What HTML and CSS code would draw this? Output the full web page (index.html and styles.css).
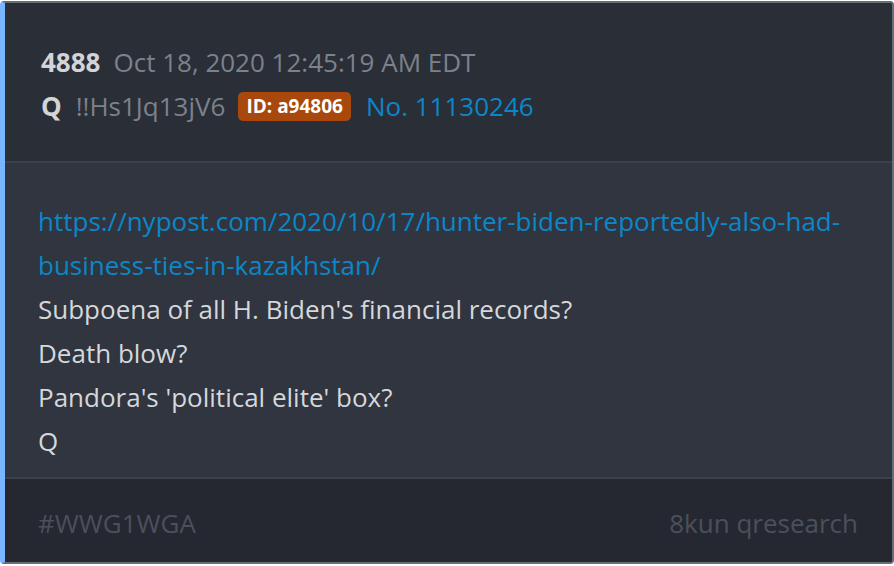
FILE: index.html
```html
<!DOCTYPE html>
<html lang="en">
<head>
    <meta charset="UTF-8">
    <title>Q Drop 4888</title>
    <link rel="stylesheet" href="styles.css">
</head>
<body>
    <div class="post">
        <!-- Post header -->
        <header class="post-header">
            <div class="meta-line">
                <span class="post-num">4888</span>
                <span class="post-date">Oct 18, 2020 12:45:19 AM EDT</span>
            </div>
            <div class="meta-line">
                <span class="author">Q</span>
                <span class="tripcode">!!Hs1Jq13jV6</span>
                <span class="id-badge">ID: a94806</span>
                <a class="post-link" href="#">No. 11130246</a>
            </div>
        </header>

        <!-- Post body -->
        <section class="post-body">
            <a class="body-link" href="#">https://nypost.com/2020/10/17/hunter-biden-reportedly-also-had-business-ties-in-kazakhstan/</a>
            <p>Subpoena of all H. Biden's financial records?</p>
            <p>Death blow?</p>
            <p>Pandora's 'political elite' box?</p>
            <p>Q</p>
        </section>

        <!-- Post footer -->
        <footer class="post-footer">
            <span>#WWG1WGA</span>
            <span>8kun qresearch</span>
        </footer>
    </div>
</body>
</html>
```

FILE: styles.css
```css
body {
    margin: 0;
    background-color: #fff;
    font-family: "Open Sans", "Noto Sans", sans-serif;
}

.post {
    margin-top: 1px;
    width: 894px;
    box-sizing: border-box;
    border: 2px solid #686d78;
    border-left: 5px solid #7ab6ff;
    border-radius: 4px;
    overflow: hidden;
    background-color: #30353f;
}

.post-header {
    background-color: #2a2e37;
    padding: 37px 34px 33px 36px;
    border-bottom: 2px solid #3c414b;
}

.meta-line {
    display: flex;
    align-items: center;
    height: 44px;
    font-size: 26px;
}

.post-num {
    font-weight: bold;
    color: #d2d4d8;
    margin-right: 13px;
}

.post-date {
    color: #7c818c;
}

.author {
    font-weight: bold;
    color: #d2d4d8;
    margin-right: 14px;
}

.tripcode {
    color: #7c818c;
    margin-right: 13px;
}

.id-badge {
    background-color: #a8480c;
    color: #fff;
    font-weight: bold;
    font-size: 19px;
    line-height: 29px;
    padding: 0 8px;
    border-radius: 5px;
    margin-right: 15px;
}

.post-link {
    color: #0b87c9;
    text-decoration: none;
}

.post-body {
    padding: 36px 34px 14px 33px;
    border-bottom: 2px solid #3c414b;
    font-size: 26px;
    line-height: 44px;
    color: #d5d7db;
}

.post-body p {
    margin: 0;
}

.body-link {
    display: block;
    color: #0b87c9;
    text-decoration: none;
}

.post-footer {
    display: flex;
    justify-content: space-between;
    background-color: #252831;
    padding: 22px 34px 17px 33px;
    font-size: 26px;
    line-height: 44px;
    color: #4b505b;
}
```
